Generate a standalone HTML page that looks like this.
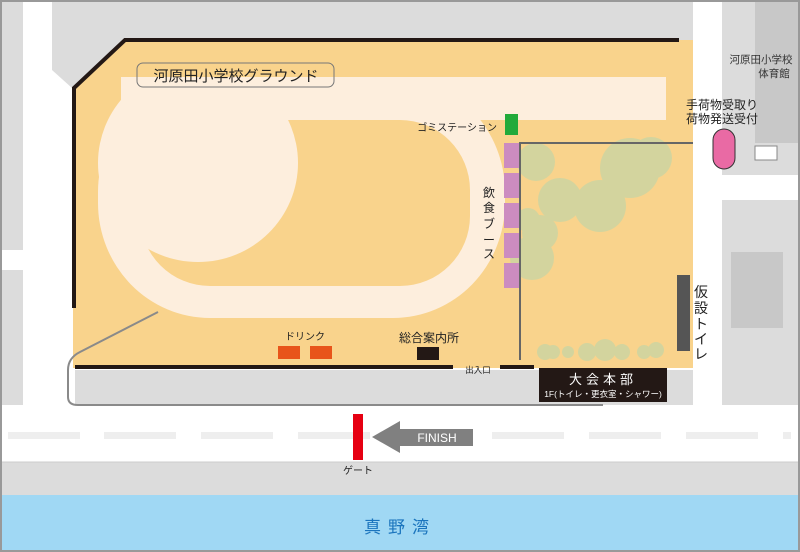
<!DOCTYPE html>
<html><head><meta charset="utf-8"><style>
html,body{margin:0;padding:0;width:800px;height:552px;overflow:hidden;background:#fff}
svg text{font-family:"Liberation Sans","Noto Sans CJK JP",sans-serif}
</style></head><body>
<svg width="800" height="552" viewBox="0 0 800 552" xmlns="http://www.w3.org/2000/svg">
<defs><clipPath id="c"><rect x="0" y="77" width="800" height="400"/></clipPath></defs>
<rect x="0" y="0" width="800" height="552" fill="#fff"/>
<rect x="52" y="0" width="641" height="40" fill="#dcdcdc"/>
<polygon points="52,40 125,40 72,88 52,70" fill="#dcdcdc"/>
<rect x="0" y="0" width="23" height="250" fill="#dcdcdc"/>
<rect x="0" y="270" width="23" height="135" fill="#dcdcdc"/>
<rect x="722" y="0" width="78" height="175" fill="#dcdcdc"/>
<rect x="755" y="0" width="45" height="143" fill="#c8c8c8"/>
<rect x="722" y="200" width="78" height="205" fill="#dcdcdc"/>
<rect x="731" y="252" width="52" height="76" fill="#c8c8c8"/>
<polygon points="73,88 125,40 693,40 693,368 73,368" fill="#f9d38c"/>
<rect x="75" y="370" width="618" height="35" fill="#dcdcdc"/>
<g fill="#fdeedd">
<rect x="121" y="77" width="545" height="43"/>
<rect x="121" y="77" width="180" height="60"/>
<rect x="98" y="77" width="407" height="241" rx="112" ry="115"/>
</g>
<rect x="140" y="120" width="330" height="166" rx="70" ry="70" fill="#f9d38c"/>
<rect x="295" y="120" width="80" height="40" fill="#f9d38c"/>
<ellipse cx="198" cy="163" rx="100" ry="99" fill="#fdeedd" clip-path="url(#c)"/>
<g fill="none" stroke="#231815" stroke-width="4">
<polyline points="679,40 125,40 74,88 74,308"/>
<line x1="75" y1="367" x2="453" y2="367"/>
<line x1="500" y1="367" x2="534" y2="367"/>
</g>
<path d="M158,312 L80,352 Q68,358 68,370 L68,397 Q68,405 78,405 L603,405" fill="none" stroke="#8a8a8a" stroke-width="2"/>
<rect x="0" y="462" width="800" height="33" fill="#dcdcdc"/>
<line x1="0" y1="462" x2="800" y2="462" stroke="#ccc" stroke-width="1"/>
<g fill="#eeeeee">
<rect x="8" y="432" width="72" height="7"/><rect x="104" y="432" width="72" height="7"/><rect x="201" y="432" width="72" height="7"/><rect x="298" y="432" width="72" height="7"/><rect x="492" y="432" width="72" height="7"/><rect x="589" y="432" width="72" height="7"/><rect x="686" y="432" width="72" height="7"/><rect x="783" y="432" width="8" height="7"/>
</g>
<rect x="0" y="495" width="800" height="57" fill="#a0d8f4"/>
<text x="400" y="533" font-size="17" fill="#1a74bd" text-anchor="middle" letter-spacing="7">真野湾</text>
<g fill="#d3d49e">
<circle cx="536" cy="162" r="19"/><circle cx="560" cy="200" r="22"/><circle cx="600" cy="206" r="26"/><circle cx="630" cy="168" r="30"/><circle cx="651" cy="158" r="21"/><circle cx="540" cy="233" r="18"/><circle cx="532" cy="258" r="22"/><circle cx="528" cy="220" r="12"/>
<circle cx="545" cy="352" r="8"/><circle cx="553" cy="352" r="7"/><circle cx="568" cy="352" r="6"/><circle cx="587" cy="352" r="9"/><circle cx="605" cy="350" r="11"/><circle cx="622" cy="352" r="8"/><circle cx="644" cy="352" r="7"/><circle cx="656" cy="350" r="8"/>
</g>
<polyline points="520,360 520,143 693,143" fill="none" stroke="#666" stroke-width="2"/>
<g fill="#cc8cc0">
<rect x="504" y="143" width="15" height="25"/><rect x="504" y="173" width="15" height="25"/><rect x="504" y="203" width="15" height="25"/><rect x="504" y="233" width="15" height="25"/><rect x="504" y="263" width="15" height="25"/>
</g>
<rect x="505" y="114" width="13" height="21" fill="#22aa3a"/>
<text x="497" y="131" font-size="10" fill="#222" text-anchor="end">ゴミステーション</text>
<g font-size="12" fill="#222" text-anchor="middle">
<text x="489" y="197">飲</text><text x="489" y="212">食</text><text x="489" y="228">ブ</text><text x="489" y="244">ー</text><text x="489" y="258">ス</text>
</g>
<rect x="677" y="275" width="13" height="76" fill="#555"/>
<g font-size="14" fill="#222" text-anchor="middle">
<text x="701" y="297">仮</text><text x="701" y="313">設</text><text x="701" y="329">ト</text><text x="701" y="344">イ</text><text x="701" y="359">レ</text>
</g>
<text x="305" y="340" font-size="10" fill="#222" text-anchor="middle">ドリンク</text>
<rect x="278" y="346" width="22" height="13" fill="#e8541a"/><rect x="310" y="346" width="22" height="13" fill="#e8541a"/>
<text x="429" y="342" font-size="12" fill="#222" text-anchor="middle">総合案内所</text>
<rect x="417" y="347" width="22" height="13" fill="#231815"/>
<text x="478" y="373" font-size="8.5" fill="#222" text-anchor="middle">出入口</text>
<rect x="539" y="368" width="128" height="34" fill="#231815"/>
<text x="603" y="384" font-size="13" fill="#fff" text-anchor="middle" letter-spacing="4">大会本部</text>
<text x="603" y="397" font-size="8.5" fill="#fff" text-anchor="middle">1F(トイレ・更衣室・シャワー)</text>
<rect x="353" y="414" width="10" height="46" fill="#e60012"/>
<text x="358" y="474" font-size="10" fill="#222" text-anchor="middle">ゲート</text>
<polygon points="372,437 400,421 400,453" fill="#808080"/>
<rect x="400" y="429" width="73" height="17" fill="#808080"/>
<text x="437" y="442" font-size="12" fill="#fff" text-anchor="middle">FINISH</text>
<rect x="137" y="63" width="197" height="24" rx="6" fill="none" stroke="#777" stroke-width="1"/>
<text x="236" y="81" font-size="15" fill="#222" text-anchor="middle">河原田小学校グラウンド</text>
<text x="761" y="63" font-size="10.5" fill="#333" text-anchor="middle">河原田小学校</text>
<text x="774" y="77" font-size="10.5" fill="#333" text-anchor="middle">体育館</text>
<text x="722" y="109" font-size="12" fill="#222" text-anchor="middle">手荷物受取り</text>
<text x="722" y="123" font-size="12" fill="#222" text-anchor="middle">荷物発送受付</text>
<rect x="713" y="129" width="22" height="40" rx="11" fill="#e96aa4" stroke="#333" stroke-width="1"/>
<rect x="755" y="146" width="22" height="14" fill="#fff" stroke="#888" stroke-width="1"/>
<rect x="1" y="1" width="798" height="550" fill="none" stroke="#999" stroke-width="2"/>
</svg>
</body></html>
